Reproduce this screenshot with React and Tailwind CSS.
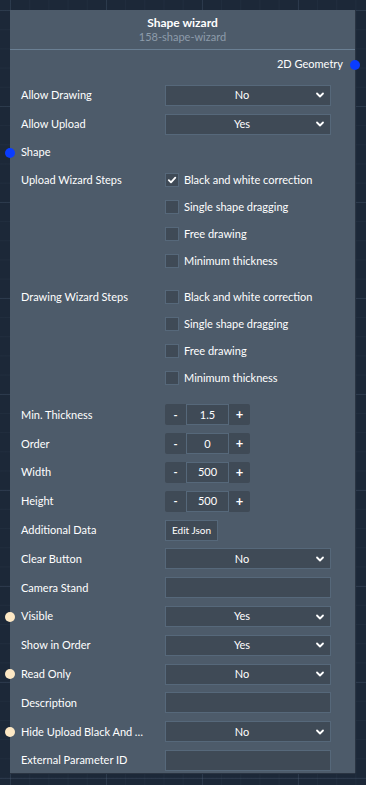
import React from 'react'

const ChevronDown = () => (
  <svg width="10" height="10" viewBox="0 0 10 10" className="absolute right-[5px] top-1/2 -translate-y-1/2">
    <path d="M2 3.5 L5 6.5 L8 3.5" fill="none" stroke="#ffffff" strokeWidth="1.8" strokeLinecap="round" strokeLinejoin="round" />
  </svg>
)

// 下拉選單
const Select = ({ value }) => (
  <div className="relative w-[166px] h-[21px] pr-[12px] bg-[#3f4a56] border border-[#56687a] flex items-center justify-center text-[11px] text-white">
    {value}
    <ChevronDown />
  </div>
)

const TextInput = () => (
  <div className="w-[166px] h-[21px] bg-[#3f4a56] border border-[#56687a]" />
)

const Stepper = ({ value }) => (
  <div className="flex h-[21px] text-[11px] text-white">
    <div className="w-[21px] bg-[#3f4a56] rounded-l-[2px] flex items-center justify-center font-bold">-</div>
    <div className="w-[43px] bg-[#3f4a56] border border-[#56687a] flex items-center justify-center">{value}</div>
    <div className="w-[21px] bg-[#3f4a56] rounded-r-[2px] flex items-center justify-center font-bold text-[13px]">+</div>
  </div>
)

const Checkbox = ({ label, checked }) => (
  <div className="flex items-center gap-[5px] h-[27px]">
    <div className="w-[14px] h-[14px] bg-[#3f4a56] border border-[#56687a] flex items-center justify-center">
      {checked && (
        <svg width="10" height="10" viewBox="0 0 10 10">
          <path d="M1.8 5.2 L4 7.4 L8.3 2.6" fill="none" stroke="#ffffff" strokeWidth="1.8" strokeLinecap="round" strokeLinejoin="round" />
        </svg>
      )}
    </div>
    <span className="text-[11px] text-white">{label}</span>
  </div>
)

const Dot = ({ color }) => (
  <span className={`absolute left-[-5px] top-1/2 -translate-y-1/2 w-[10px] h-[10px] rounded-full ${color}`} />
)

const Row = ({ label, dot, children }) => (
  <div className="relative flex items-center h-[28.8px]">
    {dot && <Dot color={dot} />}
    <div className="w-[155px] pl-[11px] pr-[16px] text-[11px] text-white truncate">{label}</div>
    {children}
  </div>
)

const stepsList = ['Black and white correction', 'Single shape dragging', 'Free drawing', 'Minimum thickness']

const StepsRow = ({ label, checkedFirst }) => (
  <div className="flex">
    <div className="w-[155px] pl-[11px] text-[11px] text-white h-[27px] flex items-center">{label}</div>
    <div className="flex flex-col">
      {stepsList.map((s, i) => (
        <Checkbox key={s} label={s} checked={checkedFirst && i === 0} />
      ))}
    </div>
  </div>
)

export default function App() {
  return (
    <div
      className="w-[366px] h-[785px] overflow-hidden pt-[10px] pl-[10px] bg-[#1c2838] bg-[linear-gradient(to_right,rgba(120,140,170,0.14)_1px,transparent_1px),linear-gradient(to_bottom,rgba(120,140,170,0.14)_1px,transparent_1px),linear-gradient(to_right,rgba(120,140,170,0.05)_1px,transparent_1px),linear-gradient(to_bottom,rgba(120,140,170,0.05)_1px,transparent_1px)] bg-[size:96px_96px,96px_96px,19.2px_19.2px,19.2px_19.2px] bg-[position:10px_10px,10px_10px,10px_10px,10px_10px]"
      style={{ fontFamily: 'Lato, "Noto Sans", sans-serif' }}
    >
      <div className="relative w-[345px] h-[763px] bg-[#4d5b6a] shadow-[1px_0_0_#2a3442,0_1px_0_#2a3442]">
        {/* 標題 */}
        <div className="h-[40px] border-b border-[#6a7f93] flex flex-col items-center justify-center">
          <div className="text-[12px] font-bold text-white leading-[15px]">Shape wizard</div>
          <div className="text-[11px] text-[#8d9cab] leading-[14px]">158-shape-wizard</div>
        </div>

        {/* 輸出 */}
        <div className="relative h-[27px] flex items-center justify-end pr-[12px] mt-[1px] mb-[3px]">
          <span className="text-[11px] text-white">2D Geometry</span>
          <span className="absolute right-[-5px] top-1/2 -translate-y-1/2 w-[10px] h-[10px] rounded-full bg-[#0a3cff]" />
        </div>

        <Row label="Allow Drawing"><Select value="No" /></Row>
        <Row label="Allow Upload"><Select value="Yes" /></Row>
        <div className="relative flex items-center h-[28px]">
          <Dot color="bg-[#0a3cff]" />
          <span className="pl-[11px] text-[11px] text-white">Shape</span>
        </div>

        <StepsRow label="Upload Wizard Steps" checkedFirst />
        <div className="h-[9px]" />
        <StepsRow label="Drawing Wizard Steps" />
        <div className="h-[9px]" />

        <Row label="Min. Thickness"><Stepper value="1.5" /></Row>
        <Row label="Order"><Stepper value="0" /></Row>
        <Row label="Width"><Stepper value="500" /></Row>
        <Row label="Height"><Stepper value="500" /></Row>
        <Row label="Additional Data">
          <div className="h-[21px] px-[6px] bg-[#3f4a56] border border-[#56687a] flex items-center text-[10px] text-white">Edit Json</div>
        </Row>
        <Row label="Clear Button"><Select value="No" /></Row>
        <Row label="Camera Stand"><TextInput /></Row>
        <Row label="Visible" dot="bg-[#fde8c4]"><Select value="Yes" /></Row>
        <Row label="Show in Order"><Select value="Yes" /></Row>
        <Row label="Read Only" dot="bg-[#fde8c4]"><Select value="No" /></Row>
        <Row label="Description"><TextInput /></Row>
        <Row label="Hide Upload Black And White Correction" dot="bg-[#fde8c4]"><Select value="No" /></Row>
        <Row label="External Parameter ID"><TextInput /></Row>
      </div>
    </div>
  )
}
